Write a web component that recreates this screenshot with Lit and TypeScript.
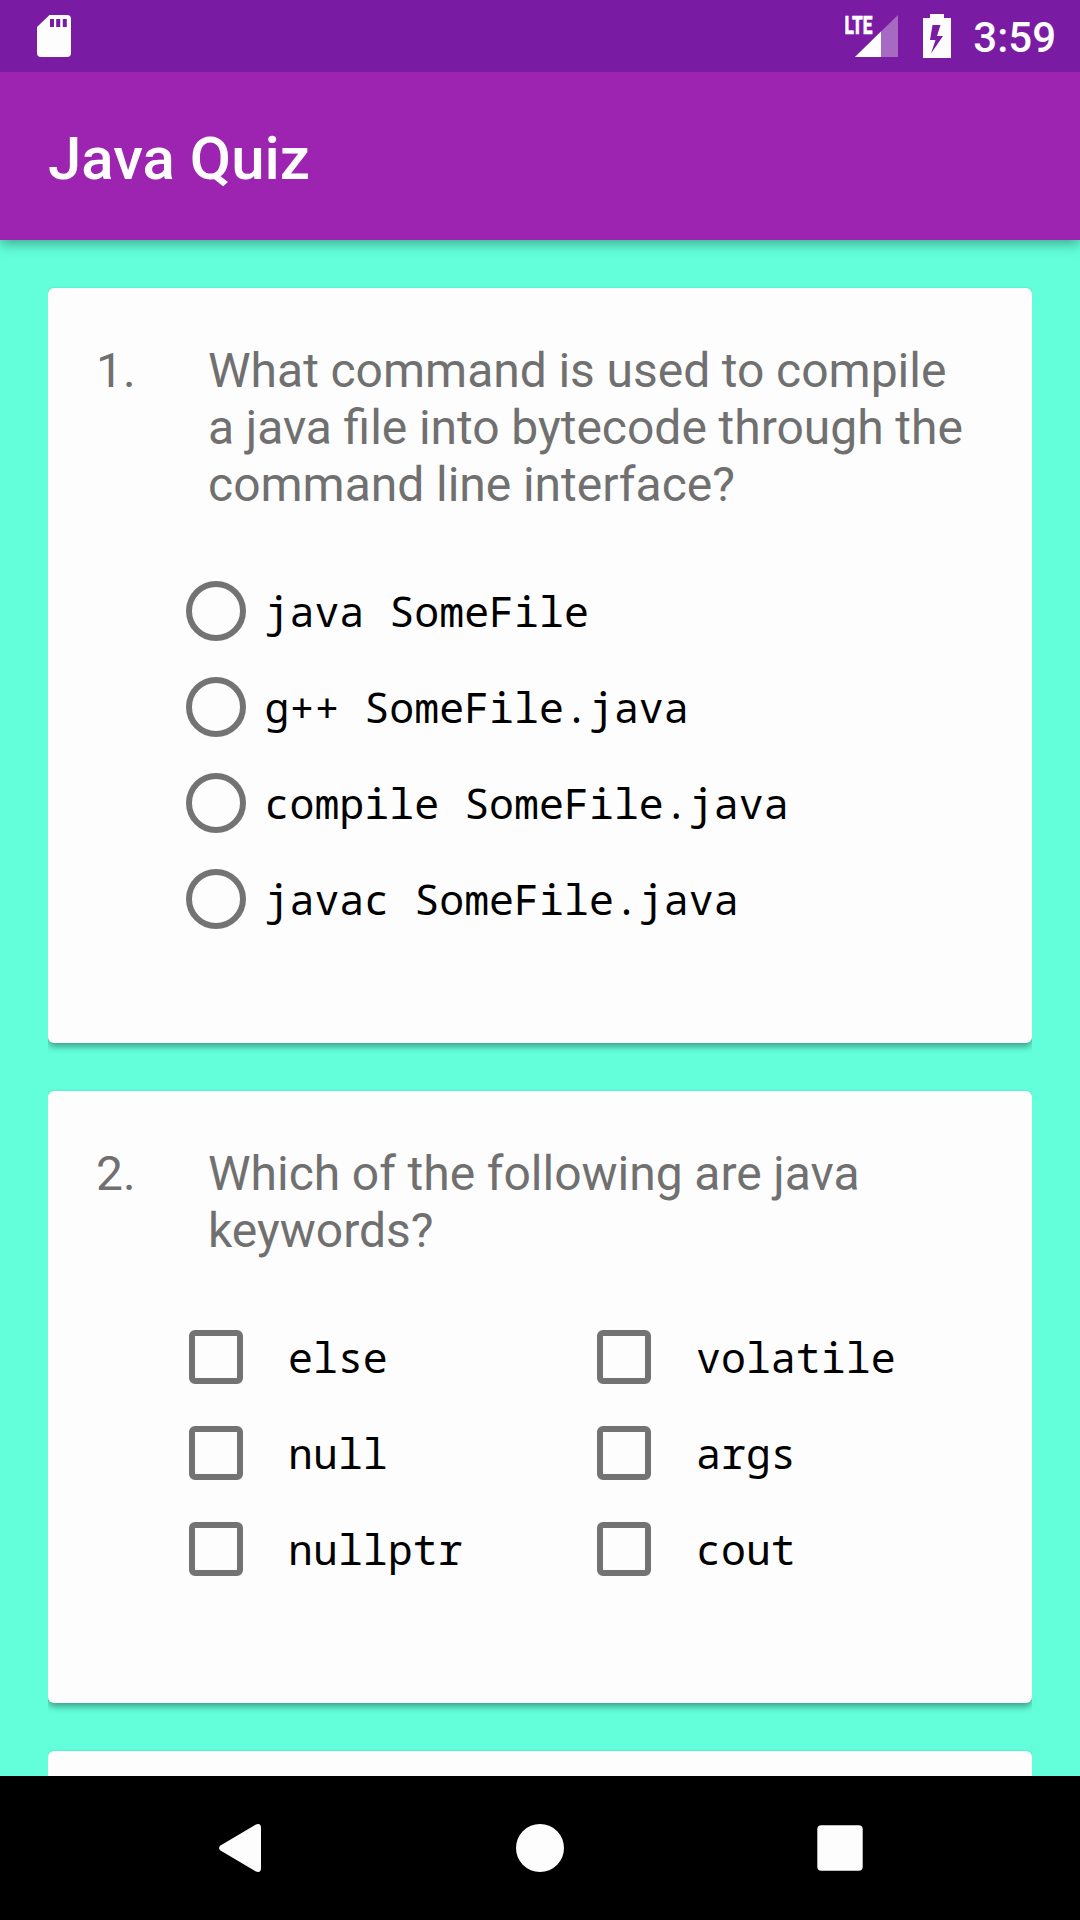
import { LitElement, html, css, svg } from "lit";
import { customElement, property } from "lit/decorators.js";

type Question = {
  number: number;
  text: string;
  kind: "radio" | "checkbox";
  options: string[];
};

const QUESTIONS: Question[] = [
  {
    number: 1,
    text: "What command is used to compile a java file into bytecode through the command line interface?",
    kind: "radio",
    options: ["java SomeFile", "g++ SomeFile.java", "compile SomeFile.java", "javac SomeFile.java"],
  },
  {
    number: 2,
    text: "Which of the following are java keywords?",
    kind: "checkbox",
    options: ["else", "volatile", "null", "args", "nullptr", "cout"],
  },
];

@customElement("status-bar")
export class StatusBar extends LitElement {
  static styles = css`
    :host {
      display: flex;
      align-items: center;
      justify-content: space-between;
      box-sizing: border-box;
      height: 72px;
      flex: none;
      padding: 0 24px 0 36px;
      background: #7a1ca3;
      color: #fdfdfd;
    }
    svg {
      display: block;
    }
    .right {
      display: flex;
      align-items: center;
    }
    .battery {
      margin-left: 23px;
    }
    .clock {
      margin-left: 21px;
      font: 500 42px/50px Roboto, sans-serif;
      padding-top: 4px;
    }
    .lte {
      font: 800 26.5px Roboto, sans-serif;
      stroke: #fdfdfd;
      stroke-width: 0.6px;
    }
  `;

  render() {
    return html`
      <svg width="36" height="72" viewBox="0 0 36 72" fill="#fdfdfd">
        <path
          fill-rule="evenodd"
          d="M13.5 15H31a4 4 0 0 1 4 4V53a4 4 0 0 1-4 4H5a4 4 0 0 1-4-4V27zM14 19v8h4v-8zM20.200 19v8h4v-8zM26.800 19v8h4v-8z"
        />
      </svg>
      <div class="right">
        <svg width="54" height="72" viewBox="0 0 54 72" fill="#fdfdfd">
          <path d="M53 15V57H10z" opacity="0.35" />
          <path d="M36 31.500V57H10z" />
          ${svg`<text class="lte" x="-0.500" y="33.500" textLength="28" lengthAdjust="spacingAndGlyphs">LTE</text>`}
        </svg>
        <svg class="battery" width="30" height="72" viewBox="0 0 30 72" fill="#fdfdfd">
          <path
            fill-rule="evenodd"
            d="M8 14h14v4h7v40H1V18h7zM10.500 25L8 40h5.500L9 53.500L21 36h-6L18.500 25z"
          />
        </svg>
        <span class="clock">3:59</span>
      </div>
    `;
  }
}

@customElement("quiz-card")
export class QuizCard extends LitElement {
  @property({ attribute: false }) question?: Question;

  static styles = css`
    :host {
      display: block;
      flex: none;
      box-sizing: border-box;
      min-height: 240px;
      background: #fdfdfd;
      border-radius: 6px;
      box-shadow: 0 4px 6px rgba(0, 0, 0, 0.34), 0 0 2px rgba(0, 0, 0, 0.1);
      clip-path: inset(-2px 0 -16px 0);
    }
    .head {
      display: grid;
      grid-template-columns: 112px 1fr;
      padding: 54px 64px 50px 48px;
      font: 400 48px/57px Roboto, sans-serif;
      word-spacing: -0.3px;
      color: #707070;
    }
    .options {
      display: grid;
      color: #000;
      font: 400 41.600px/50px "Droid Sans Mono", "Noto Sans Mono", "DejaVu Sans Mono", monospace;
    }
    .radio {
      padding: 0 0 96px 138px;
    }
    .checkbox {
      grid-template-columns: 408px 408px;
      padding: 0 0 106px 141px;
    }
    .option {
      display: flex;
      align-items: center;
      height: 96px;
      white-space: pre;
    }
    .mark {
      box-sizing: border-box;
      flex: none;
      border: 6px solid #737373;
    }
    .radio .mark {
      width: 60px;
      height: 60px;
      border-radius: 50%;
      margin-right: 18.5px;
    }
    .checkbox .mark {
      width: 54px;
      height: 54px;
      border-radius: 6px;
      margin-right: 45px;
    }
  `;

  render() {
    const q = this.question;
    if (!q) return null;
    return html`
      <div class="head"><span>${q.number}.</span><span>${q.text}</span></div>
      <div class="options ${q.kind}">
        ${q.options.map(
          (o) => html`<div class="option"><span class="mark"></span><span>${o}</span></div>`,
        )}
      </div>
    `;
  }
}

@customElement("nav-bar")
export class NavBar extends LitElement {
  static styles = css`
    :host {
      display: flex;
      align-items: center;
      justify-content: space-between;
      box-sizing: border-box;
      flex: none;
      height: 144px;
      padding: 0 210px;
      background: #000;
    }
    svg {
      display: block;
      fill: #fdfdfd;
    }
  `;

  render() {
    return html`
      <svg width="60" height="60" viewBox="0 0 60 60">
        <path d="M10.500 27.500L45.500 6.700Q51 4.500 51 10V50Q51 55.500 45.500 53.300L10.500 32.500Q7.500 30 10.500 27.500z" />
      </svg>
      <svg width="60" height="60" viewBox="0 0 60 60"><circle cx="30" cy="30" r="24" /></svg>
      <svg width="60" height="60" viewBox="0 0 60 60"><rect x="7.300" y="7.300" width="45.400" height="45.400" rx="4" /></svg>
    `;
  }
}

@customElement("app-root")
export class AppRoot extends LitElement {
  static styles = css`
    :host {
      display: flex;
      flex-direction: column;
      width: 1080px;
      height: 1920px;
      overflow: hidden;
      background: #62ffda;
    }
    .toolbar {
      flex: none;
      z-index: 1;
      display: flex;
      align-items: center;
      box-sizing: border-box;
      height: 168px;
      padding: 5px 48px 0;
      background: #9c24b0;
      color: #fdfdfd;
      font: 500 60px/70px Roboto, sans-serif;
      box-shadow: 0 4px 12px rgba(0, 0, 0, 0.34);
      clip-path: inset(0 0 -24px 0);
    }
    .list {
      flex: 1;
      min-height: 0;
      overflow: hidden;
      display: flex;
      flex-direction: column;
      gap: 48px;
      padding: 48px 48px 0;
    }
  `;

  render() {
    return html`
      <status-bar></status-bar>
      <div class="toolbar">Java Quiz</div>
      <div class="list">
        ${QUESTIONS.map((q) => html`<quiz-card .question=${q}></quiz-card>`)}
        <quiz-card></quiz-card>
      </div>
      <nav-bar></nav-bar>
    `;
  }
}
